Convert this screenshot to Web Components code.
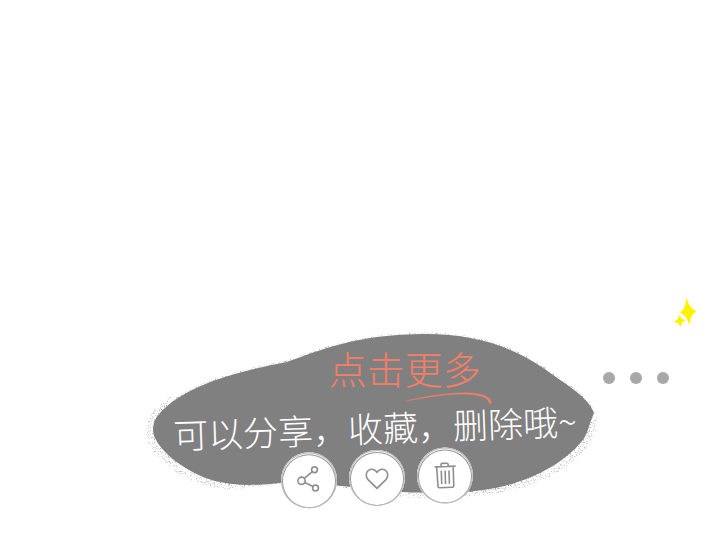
<!DOCTYPE html>
<html lang="zh-CN">
<head>
<meta charset="utf-8">
<meta name="viewport" content="width=device-width, initial-scale=1">
<title>点击更多</title>
<style>
  html, body { margin: 0; min-height: 100%; background: #fff; }
  body { font-family: "Noto Sans CJK SC", sans-serif; }
</style>
</head>
<body>
<guide-scene>
  <hint-bubble>
    <span slot="title">点击更多</span>
    <span slot="text">可以分享，收藏，删除哦~</span>
    <round-action slot="actions" icon="share" label="分享"></round-action>
    <round-action slot="actions" icon="heart" label="收藏"></round-action>
    <round-action slot="actions" icon="trash" label="删除"></round-action>
  </hint-bubble>
  <more-menu slot="more"></more-menu>
</guide-scene>

<script>
class GuideScene extends HTMLElement {
  constructor() {
    super();
    this.attachShadow({ mode: 'open' }).innerHTML = `
      <style>
        :host { display: grid; box-sizing: border-box; min-height: 100vh; padding-bottom: 32px;
          grid-template-columns: 148fr 452fr 120fr; align-items: end; overflow: hidden; }
        .main { grid-column: 2; min-width: 0; }
        .side { grid-column: 3; }
      </style>
      <div class="main"><slot></slot></div>
      <div class="side"><slot name="more"></slot></div>`;
  }
}

const BLOB = 'M5 100C5 91 9 85 17 78C43 54 91 41 139 32C170 21 208 4 277 4C330 4 367 18 398 40C416 53 435 64 443 77L446 83C441 94 440 104 434 111C413 137 374 155 335 160C303 164 255 164 226 159C195 157 170 152 143 152C119 154 95 158 67 151C37 143 5 117 5 100Z';

class HintBubble extends HTMLElement {
  constructor() {
    super();
    this.attachShadow({ mode: 'open' }).innerHTML = `
      <style>
        :host { display: flex; flex-direction: column; position: relative; z-index: 0; padding-top: 16px; }
        .blob { position: absolute; inset: 0; width: 100%; height: 100%; overflow: visible; z-index: -1; }
        h1, p { margin: 0; font-weight: 300; line-height: 44px; white-space: nowrap; }
        h1 { padding-left: 40%; font-size: 38px; color: #f57e66; }
        .stroke { display: block; width: 88px; height: 13px; margin: 2px 0 0 57%; overflow: visible; }
        p { padding-left: 25px; font-size: 35px; color: #fff; transform: rotate(-2deg); }
        .actions { display: flex; justify-content: center; gap: 12px; padding-left: 6px; margin-top: 1px; padding-bottom: 1px;
          transform: rotate(-2deg); }
      </style>
      <svg class="blob" viewBox="0 0 452 177" preserveAspectRatio="none" aria-hidden="true">
        <defs>
          <filter id="grain" x="-5%" y="-5%" width="110%" height="110%" color-interpolation-filters="sRGB">
            <feTurbulence type="fractalNoise" baseFrequency="0.8" numOctaves="2" seed="7" result="n"/>
            <feColorMatrix in="n" type="matrix" values="0 0 0 0 0  0 0 0 0 0  0 0 0 0 0  6 0 0 0 -3.2" result="d"/>
            <feComposite in="SourceGraphic" in2="d" operator="in"/>
          </filter>
        </defs>
        <g filter="url(#grain)" fill="none" stroke="#8c8c8c">
          <path d="${BLOB}" stroke-width="3" stroke-opacity=".7"/>
          <path d="M24 69C-2 86 -5 106 11 123C34 149 65 158 98 156" stroke-width="6" stroke-opacity=".5"/>
          <path d="M447 87C446 104 437 119 421 131C397 150 361 160 334 162C297 166 260 166 226 162" stroke-width="6" stroke-opacity=".5"/>
        </g>
        <path d="${BLOB}" fill="#808080"/>
      </svg>
      <h1><slot name="title"></slot></h1>
      <svg class="stroke" viewBox="0 0 88 13" aria-hidden="true">
        <path d="M0 9C22 4 46 0 65 1C78 2 87 6 85 12L83 11C83 6 75 3 65 2.400C44 1 24 5 0 9Z" fill="#f57e66" stroke="#f57e66" stroke-width=".4"/>
      </svg>
      <p><slot name="text"></slot></p>
      <div class="actions"><slot name="actions"></slot></div>`;
  }
}

const ICONS = {
  share: '<g transform="rotate(2 14 14)"><circle cx="6.500" cy="14.500" r="3.600"/><circle cx="19.500" cy="3.500" r="2.900"/><circle cx="20.500" cy="21.800" r="2.900"/><path d="M9.300 12.200L17.200 5.400M9.700 16.200L18 20.300"/></g>',
  heart: '<g transform="rotate(2 14 14)"><path d="M14 24.500L5.300 16C2.400 13 2.700 8.500 5.500 6.500C8.600 4.200 12.500 5.500 14 8.500C15.500 5.500 19.400 4.200 22.500 6.500C25.300 8.500 25.600 13 22.700 16Z"/></g>',
  trash: '<path d="M4 5H25M10.500 5V2.800Q10.500 1.800 11.500 1.800H16.500Q17.500 1.800 17.500 2.800V5M6 5.500L6.700 24.500Q6.800 26 8 26H21Q22.500 26 22.500 24.500V5.500M10.500 9V22.500M14.300 9V22.500M18.200 9V22.500"/>'
};

class RoundAction extends HTMLElement {
  constructor() {
    super();
    this.attachShadow({ mode: 'open' }).innerHTML = `
      <style>
        :host { display: block; }
        button { display: grid; place-items: center; box-sizing: border-box; width: 56px; height: 56px; padding: 0;
          border: 0; border-radius: 50%; background: #fff; cursor: pointer;
          box-shadow: inset 0 0 0 1px #bbb, inset 0 1px 0 1px #f4f4f4, inset 0 1px 0 2px #999; }
        svg { width: 28px; height: 28px; fill: none; stroke: #8e8e8e; stroke-width: 1.600; stroke-linejoin: round; }
      </style>
      <button type="button" aria-label="${this.getAttribute('label')}">
        <svg viewBox="0 0 28 28" aria-hidden="true">${ICONS[this.getAttribute('icon')]}</svg>
      </button>`;
  }
}

class MoreMenu extends HTMLElement {
  constructor() {
    super();
    this.attachShadow({ mode: 'open' }).innerHTML = `
      <style>
        :host { display: flex; flex-direction: column; align-items: flex-start; padding: 0 0 123px 3px; }
        svg { width: 24px; height: 26px; margin: 0 0 47px 71px; overflow: visible; }
        button { display: flex; gap: 15px; padding: 0; border: 0; background: none; cursor: pointer; }
        i { width: 12px; height: 12px; border-radius: 50%; background: #a8a8a8; }
      </style>
      <svg viewBox="0 0 24 26" fill="#fff100" aria-hidden="true">
        <path d="M12.500 0Q15 9 22 12.500Q16 15 15.500 25Q12.500 16 6.500 13.500Q12 10 12.500 0Z" stroke="#fff100" stroke-width=".8"/>
        <path d="M5.500 16Q6.500 20 11.500 21.500Q7 22.500 6.500 27.500Q4.500 23 0 22.500Q5 21 5.500 16Z" stroke="#fff100" stroke-width=".4"/>
      </svg>
      <button type="button" aria-label="更多"><i></i><i></i><i></i></button>`;
  }
}

customElements.define('guide-scene', GuideScene);
customElements.define('hint-bubble', HintBubble);
customElements.define('round-action', RoundAction);
customElements.define('more-menu', MoreMenu);
</script>
</body>
</html>
